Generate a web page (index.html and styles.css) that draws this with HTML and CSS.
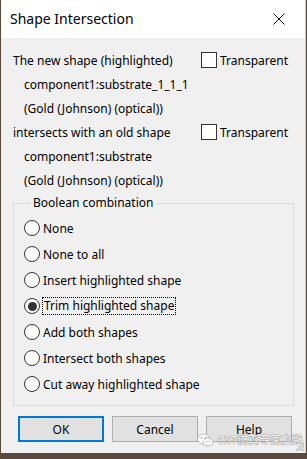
FILE: index.html
```html
<!DOCTYPE html>
<html lang="en">

<head>
    <meta charset="UTF-8">
    <title>Shape Intersection</title>
    <link rel="stylesheet" href="styles.css">
</head>

<body>
    <div class="dialog">
        <div class="titlebar">
            <span class="title">Shape Intersection</span>
            <span class="close">
                <svg width="12" height="12" viewBox="0 0 12 12">
                    <path d="M0.5 0.5 L11.5 11.5 M11.5 0.5 L0.5 11.5" stroke="#111" stroke-width="1" fill="none"/>
                </svg>
            </span>
        </div>

        <div class="content">
            <div class="row">
                <span class="label">The new shape (highlighted)</span>
                <label class="check"><span class="box"></span>Transparent</label>
            </div>
            <div class="row indent">component1:substrate_1_1_1</div>
            <div class="row indent">(Gold (Johnson) (optical))</div>
            <div class="row">
                <span class="label">intersects with an old shape</span>
                <label class="check"><span class="box"></span>Transparent</label>
            </div>
            <div class="row indent">component1:substrate</div>
            <div class="row indent">(Gold (Johnson) (optical))</div>

            <fieldset class="group">
                <legend>Boolean combination</legend>
                <div class="radio"><span class="dot"></span><span>None</span></div>
                <div class="radio"><span class="dot"></span><span>None to all</span></div>
                <div class="radio"><span class="dot"></span><span>Insert highlighted shape</span></div>
                <div class="radio checked"><span class="dot"></span><span class="focus">Trim highlighted shape</span></div>
                <div class="radio"><span class="dot"></span><span>Add both shapes</span></div>
                <div class="radio"><span class="dot"></span><span>Intersect both shapes</span></div>
                <div class="radio"><span class="dot"></span><span>Cut away highlighted shape</span></div>
            </fieldset>

            <div class="buttons">
                <button class="btn default">OK</button>
                <button class="btn">Cancel</button>
                <button class="btn">Help</button>
            </div>
        </div>

        <div class="watermark">
            <svg width="17" height="14" viewBox="0 0 17 14">
                <ellipse cx="6.5" cy="6" rx="6" ry="5" fill="#fff" stroke="#aaa" stroke-width="0.8"/>
                <ellipse cx="11" cy="9" rx="5" ry="4" fill="#fff" stroke="#aaa" stroke-width="0.8"/>
                <circle cx="4.5" cy="5" r="0.9" fill="#aaa"/>
                <circle cx="8.5" cy="5" r="0.9" fill="#aaa"/>
                <circle cx="9.5" cy="8.5" r="0.7" fill="#aaa"/>
                <circle cx="12.5" cy="8.5" r="0.7" fill="#aaa"/>
            </svg>
            <span>CST仿真专家之路</span>
        </div>

        <svg class="grip" width="10" height="10" viewBox="0 0 10 10">
            <path d="M9 1 L1 9 M9 4 L4 9 M9 7 L7 9" stroke="#9a9a9a" stroke-width="1" fill="none"/>
        </svg>
    </div>
</body>

</html>
```

FILE: styles.css
```css
* {
    padding: 0;
    margin: 0;
    box-sizing: border-box;
}

body {
    background-color: #5b4a3c;
    font-family: "Noto Sans", "Noto Sans CJK SC", sans-serif;
    font-size: 12px;
    color: #000;
}

.dialog {
    position: relative;
    width: 305px;
    height: 453px;
    margin-left: 1px;
    background-color: #f0f0f0;
    border-right: 1px solid #c8c8c8;
}

.titlebar {
    height: 38px;
    background-color: #fff;
    display: flex;
    align-items: center;
    justify-content: space-between;
    padding-left: 9px;
}

.title {
    font-size: 14px;
    margin-top: -1px;
}

.close {
    width: 46px;
    display: flex;
    justify-content: center;
    padding-right: 6px;
}

.content {
    padding: 10px 0 0 12px;
}

.row {
    height: 24px;
    display: flex;
    align-items: center;
}

.row.indent {
    padding-left: 11px;
}

.label {
    width: 188px;
}

.check {
    display: flex;
    align-items: center;
    gap: 3px;
}

.box {
    width: 16px;
    height: 16px;
    border: 1px solid #333;
    background-color: #fff;
}

.group {
    width: 281px;
    margin-top: 3px;
    border: 1px solid #dcdcdc;
    padding: 4px 0 8px 10px;
}

.group legend {
    margin-left: 7px;
    padding: 0 2px;
    line-height: 16px;
}

.radio {
    height: 26px;
    display: flex;
    align-items: center;
    gap: 3px;
}

.dot {
    width: 16px;
    height: 16px;
    border: 1px solid #333;
    border-radius: 50%;
    background-color: #fff;
    display: flex;
    align-items: center;
    justify-content: center;
}

.radio.checked .dot::after {
    content: "";
    width: 9px;
    height: 9px;
    border-radius: 50%;
    background-color: #333;
}

.focus {
    outline: 1px dotted #000;
    padding: 0 1px;
    line-height: 16px;
}

.buttons {
    display: flex;
    gap: 8px;
    margin-top: 10px;
    padding-left: 5px;
}

.btn {
    width: 86px;
    height: 26px;
    font-family: inherit;
    font-size: 12px;
    background-color: #e1e1e1;
    border: 1px solid #adadad;
    color: #000;
}

.btn.default {
    border: 2px solid #0078d7;
}

.watermark {
    position: absolute;
    left: 196px;
    top: 432px;
    display: flex;
    align-items: center;
    gap: 4px;
    white-space: nowrap;
    color: #fff;
    font-size: 11px;
    line-height: 15px;
    text-shadow: 0 0 1px #666, 0 0 1px #666;
}

.grip {
    position: absolute;
    right: 0;
    bottom: 1px;
}
```
